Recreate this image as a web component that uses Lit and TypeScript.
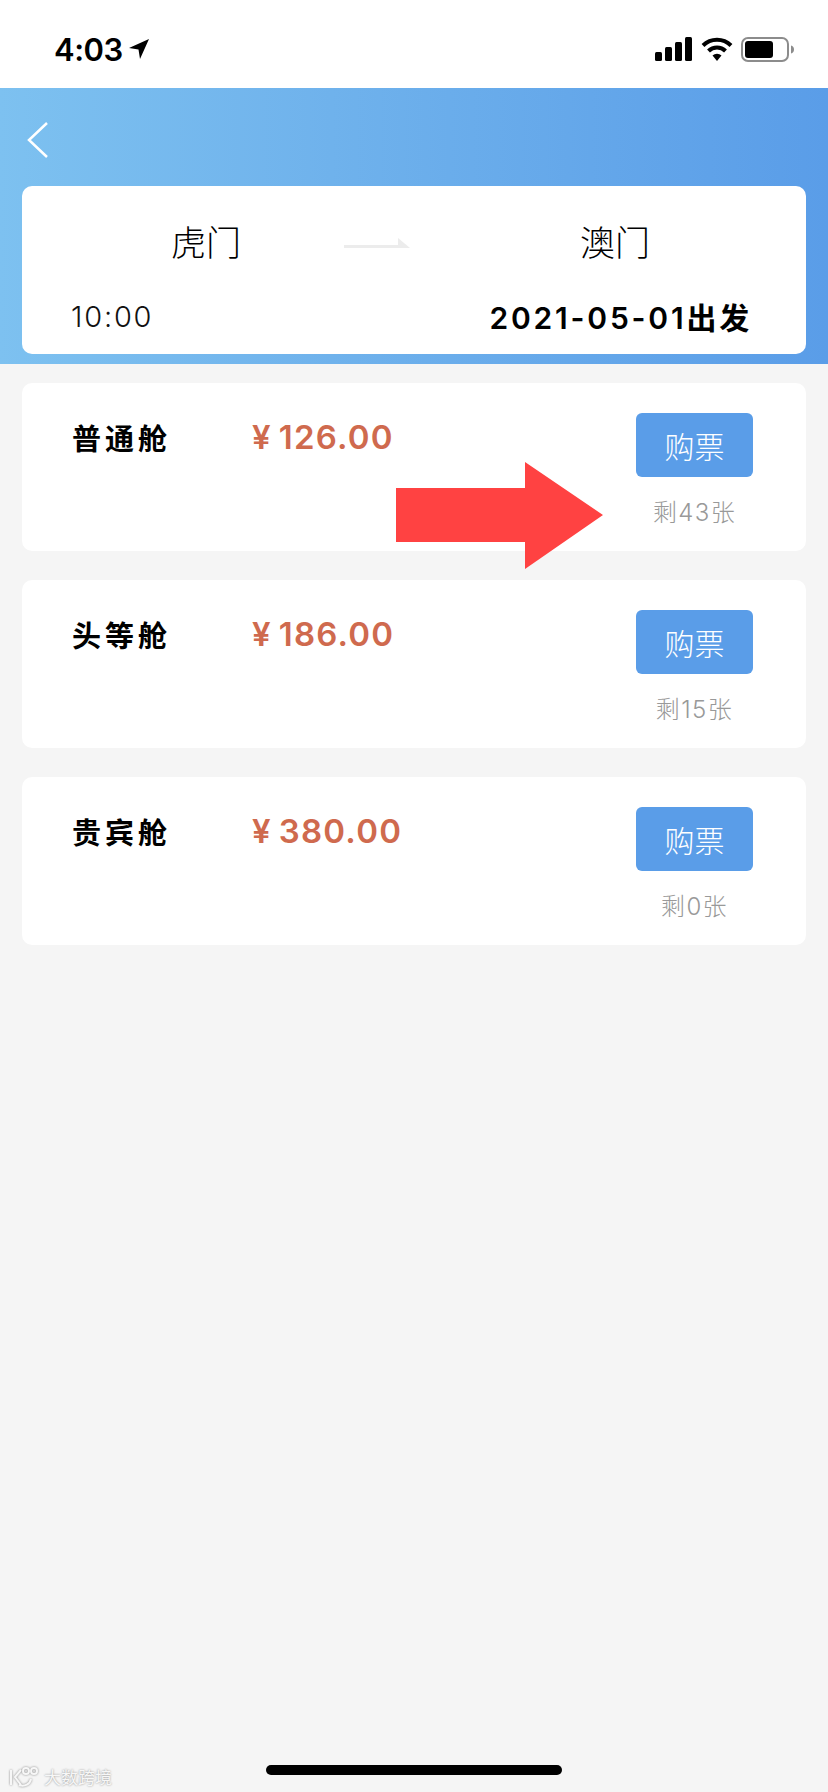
import { LitElement, html, css } from 'lit';
import { customElement } from 'lit/decorators.js';

const tickets = [
  { name: '普通舱', price: '126.00', left: '剩43张' },
  { name: '头等舱', price: '186.00', left: '剩15张' },
  { name: '贵宾舱', price: '380.00', left: '剩0张' },
];

@customElement('app-root')
export class AppRoot extends LitElement {
  static styles = css`
    :host {
      display: block;
      position: relative;
      width: 828px;
      height: 1792px;
      overflow: hidden;
      background: #f5f5f5;
      font-family: Inter, "Noto Sans CJK SC", sans-serif;
      color: #000;
    }
    .status {
      height: 88px;
      background: #fff;
      display: flex;
      align-items: center;
      justify-content: space-between;
      padding: 12px 33px 0 54px;
      box-sizing: border-box;
    }
    .clock {
      display: flex;
      align-items: center;
      gap: 5px;
      font-size: 31px;
      font-weight: 600;
      letter-spacing: -0.5px;
      padding-bottom: 2px;
    }
    .signals {
      display: flex;
      align-items: center;
      gap: 8px;
      padding-bottom: 2px;
    }
    .header {
      height: 276px;
      box-sizing: border-box;
      padding: 0 22px;
      background: linear-gradient(90deg, #7dc1f0 0%, #6fb2ec 40%, #5a9de8 100%);
    }
    .back {
      height: 98px;
      display: flex;
      align-items: flex-start;
      padding: 34px 0 0 5px;
      box-sizing: border-box;
    }
    .trip {
      height: 168px;
      background: #fff;
      border-radius: 10px;
      box-sizing: border-box;
      padding: 32px 54px 0 49px;
    }
    .route {
      display: grid;
      grid-template-columns: 270px 139px 270px;
      align-items: center;
      height: 50px;
    }
    .route span {
      font-size: 35px;
      line-height: 50px;
      text-align: center;
      font-weight: 300;
    }
    .route svg {
      justify-self: start;
      margin: 6px 0 0 3px;
    }
    .when {
      display: flex;
      justify-content: space-between;
      align-items: center;
      margin-top: 26px;
      height: 44px;
    }
    .time {
      font-size: 29px;
      font-weight: 300;
      letter-spacing: 1.8px;
      color: #111;
    }
    .date {
      font-size: 30px;
      font-weight: 600;
      letter-spacing: 2.8px;
    }
    .list {
      display: flex;
      flex-direction: column;
      gap: 29px;
      padding: 19px 22px 0;
    }
    .ticket {
      height: 168px;
      background: #fff;
      border-radius: 10px;
      box-sizing: border-box;
      padding: 30px 53px 0 50px;
      display: flex;
      align-items: flex-start;
    }
    .name {
      width: 180px;
      font-size: 29px;
      line-height: 40px;
      letter-spacing: 4px;
      font-weight: 700;
      margin-top: 7px;
    }
    .price {
      flex: 1;
      display: flex;
      gap: 7px;
      font-size: 33px;
      line-height: 40px;
      font-weight: 600;
      letter-spacing: 1.2px;
      color: #cf6a4e;
      margin-top: 4px;
    }
    .buy {
      width: 117px;
      display: flex;
      flex-direction: column;
      align-items: center;
    }
    .button {
      width: 117px;
      height: 64px;
      border-radius: 6px;
      background: #5a9de8;
      color: #fff;
      font-size: 30px;
      font-weight: 300;
      display: flex;
      align-items: center;
      justify-content: center;
    }
    .left {
      margin-top: 20px;
      font-size: 24px;
      line-height: 32px;
      font-weight: 300;
      letter-spacing: 1.4px;
      color: #999;
      white-space: nowrap;
    }
    .pointer {
      position: absolute;
      left: 396px;
      top: 462px;
    }
    .home {
      position: absolute;
      left: 266px;
      top: 1765px;
      width: 296px;
      height: 10px;
      border-radius: 5px;
      background: #000;
    }
    .mark {
      position: absolute;
      left: 8px;
      top: 1764px;
      display: flex;
      align-items: center;
      gap: 4px;
      color: #f7f7f7;
      font-size: 17px;
      text-shadow: 0 0 2px #888;
    }
  `;

  render() {
    return html`
      <div class="status">
        <div class="clock">
          4:03
          <svg width="22" height="22" viewBox="0 0 22 22">
            <path d="M21 1 1 10l9.500 1.500L12 21z" fill="#000" />
          </svg>
        </div>
        <div class="signals">
          <svg width="38" height="24" viewBox="0 0 38 24" fill="#000">
            <rect x="0" y="15" width="7" height="9" rx="1.5" />
            <rect x="10" y="10" width="7" height="14" rx="1.5" />
            <rect x="20" y="5" width="7" height="19" rx="1.5" />
            <rect x="30" y="0" width="7" height="24" rx="1.5" />
          </svg>
          <svg width="32" height="25" viewBox="0 0 32 25">
            <path d="M2 8.500a20 20 0 0 1 28 0" fill="none" stroke="#000" stroke-width="4" />
            <path d="M7.500 14a12 12 0 0 1 17 0" fill="none" stroke="#000" stroke-width="4" />
            <path d="M11.500 18.500a6.500 6.500 0 0 1 9 0L16 24z" fill="#000" />
          </svg>
          <svg width="54" height="25" viewBox="0 0 54 25">
            <rect x="1" y="1" width="46" height="23" rx="6" fill="none" stroke="#8c8c8c" stroke-width="2" />
            <rect x="4" y="4" width="28" height="17" rx="3" fill="#000" />
            <path d="M50 8.500c2 .5 3 2 3 4s-1 3.500-3 4z" fill="#8c8c8c" />
          </svg>
        </div>
      </div>

      <div class="header">
        <div class="back">
          <svg width="22" height="36" viewBox="0 0 22 36">
            <path d="M20 1 2 18l18 17" fill="none" stroke="#fff" stroke-width="2.500" />
          </svg>
        </div>
        <div class="trip">
          <div class="route">
            <span>虎门</span>
            <svg width="66" height="18" viewBox="0 0 66 18">
              <path d="M0 11h66l-12-10v7H0z" fill="#ececec" />
            </svg>
            <span>澳门</span>
          </div>
          <div class="when">
            <div class="time">10:00</div>
            <div class="date">2021-05-01出发</div>
          </div>
        </div>
      </div>

      <div class="list">
        ${tickets.map(
          (t) => html`
            <div class="ticket">
              <div class="name">${t.name}</div>
              <div class="price"><span>¥</span><span>${t.price}</span></div>
              <div class="buy">
                <div class="button">购票</div>
                <div class="left">${t.left}</div>
              </div>
            </div>
          `
        )}
      </div>

      <svg class="pointer" width="207" height="107" viewBox="0 0 207 107">
        <path d="M0 26h129V0l78 53-78 54V80H0z" fill="#ff4242" />
      </svg>

      <div class="mark">
        <svg width="32" height="22" viewBox="0 0 32 22" fill="none" stroke="#f7f7f7" stroke-width="2" style="filter: drop-shadow(0 0 1px #888)">
          <path d="M3 4v15M13 4 7 11l6 8" />
          <circle cx="18" cy="5" r="3" />
          <circle cx="26" cy="5" r="3" />
          <path d="M11 19c6 2 11-1 12-6" />
        </svg>
        <span>大数跨境</span>
      </div>
      <div class="home"></div>
    `;
  }
}
